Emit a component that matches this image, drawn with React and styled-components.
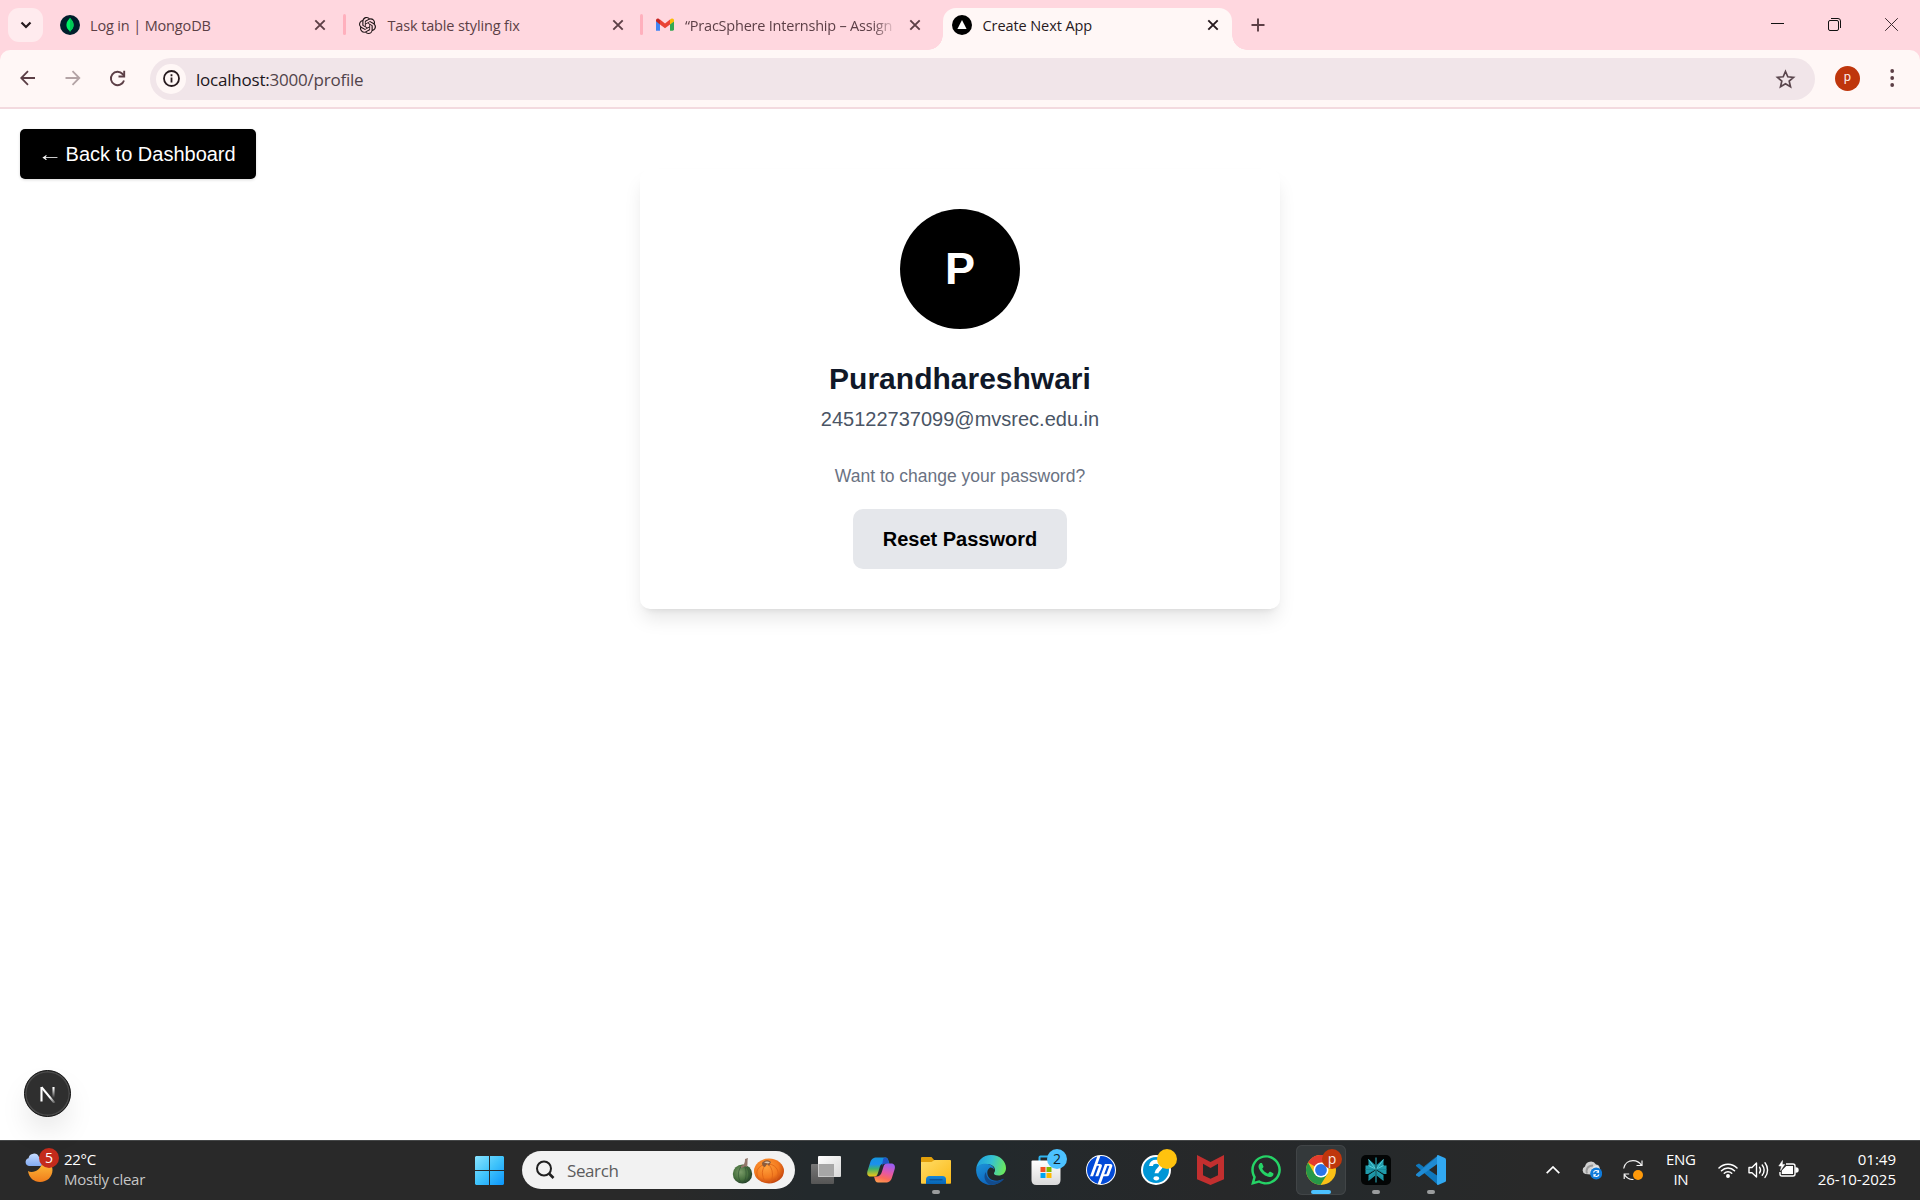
import React from "react";
import styled, { createGlobalStyle, css } from "styled-components";
import { SiOpenai, SiHp } from "react-icons/si";
import { FaWhatsapp } from "react-icons/fa";

const ui = `"Open Sans", "Noto Sans", sans-serif`;
const page = `"Liberation Sans", Arial, sans-serif`;

const Global = createGlobalStyle`
  * { box-sizing: border-box; }
  body { margin: 0; background: #fff; overflow: hidden; }
  svg { display: block; flex: none; }
  button { border: 0; padding: 0; background: none; }
`;

const Screen = styled.div`
  width: 1920px;
  height: 1200px;
  display: flex;
  flex-direction: column;
  background: #fff;
`;

/* ---------- browser chrome ---------- */

const TabStrip = styled.div`
  height: 50px;
  display: flex;
  align-items: flex-start;
  background: #ffd7df;
`;

const TabSearch = styled.button`
  width: 35px;
  height: 34px;
  margin: 8px 7px 0 8px;
  border-radius: 11px;
  background: #ffebee;
  display: grid;
  place-items: center;
`;

const TabItem = styled.div`
  position: relative;
  width: 289.5px;
  height: 42.5px;
  margin: 7.5px 0 0;
  padding: 0 9.5px 7.5px;
  display: flex;
  align-items: center;
  color: ${(p) => (p.$active ? "#271a1e" : "#5c3f46")};
  ${(p) =>
    p.$active &&
    css`
      background: #fff7f6;
      border-radius: 13px 13px 0 0;
      &::before,
      &::after {
        content: "";
        position: absolute;
        bottom: 0;
        width: 15px;
        height: 15px;
      }
      &::before {
        left: -15px;
        background: radial-gradient(circle at 0 0, transparent 14.5px, #fff7f6 15px);
      }
      &::after {
        right: -15px;
        background: radial-gradient(circle at 100% 0, transparent 14.5px, #fff7f6 15px);
      }
    `}
`;

const TabTitle = styled.div`
  flex: 1;
  margin-left: 10.5px;
  margin-right: 7.5px;
  white-space: nowrap;
  font: 400 14.5px/20px ${ui};
  letter-spacing: ${(p) => p.$spacing || 0}px;
  padding-top: 1px;
  ${(p) => p.$fade && css`mask-image: linear-gradient(90deg, #000 187px, transparent 212px);`}
`;

const Divider = styled.div`
  width: 3px;
  height: 21px;
  margin: 14px 2px 0 3px;
  border-radius: 2px;
  background: ${(p) => (p.$hidden ? "transparent" : "#ffb0bd")};
`;

const NewTab = styled.button`
  width: 30px;
  height: 30px;
  margin: 10px 0 0 10.5px;
  display: grid;
  place-items: center;
`;

const WindowControls = styled.div`
  margin-left: auto;
  display: flex;
  height: 49px;
  align-items: center;
  padding-right: 0.5px;
`;

const WindowButton = styled.button`
  width: 57px;
  height: 49px;
  display: grid;
  place-items: center;
`;

const ToolbarBack = styled.div`
  background: #ffd7df;
`;

const Toolbar = styled.div`
  height: 59px;
  display: flex;
  align-items: center;
  padding: 0 0 1px 5px;
  background: #fff7f6;
  border-radius: 10px 10px 0 0;
  border-bottom: 2px solid #f3dadf;
`;

const ToolButton = styled.button`
  width: 45px;
  height: 40px;
  display: grid;
  place-items: center;
`;

const Omnibox = styled.div`
  width: 1665px;
  height: 42px;
  margin-left: 10px;
  margin-top: 1px;
  border-radius: 21px;
  padding: 0 16px 0 6px;
  background: #f1e5e9;
  display: flex;
  align-items: center;
`;

const SiteInfo = styled.div`
  width: 30px;
  height: 30px;
  border-radius: 50%;
  background: #fff7f6;
  display: grid;
  place-items: center;
`;

const Url = styled.div`
  flex: 1;
  margin-left: 10px;
  font: 400 17px/24px ${ui};
  letter-spacing: -0.22px;
  color: #51434a;
  padding-top: 2px;
  span { color: #20161c; }
`;

const ProfileDot = styled.div`
  width: 25px;
  height: 25px;
  margin: 0 10px 0 20px;
  border-radius: 50%;
  background: #bf360c;
  color: #fbe9e4;
  display: grid;
  place-items: center;
  font: 400 13px/1 Roboto, sans-serif;
  padding-bottom: 3px;
`;

/* ---------- page ---------- */

const Page = styled.main`
  position: relative;
  flex: 1;
  padding: 20px;
  display: flex;
  flex-direction: column;
  align-items: flex-start;
  font-family: ${page};
`;

const BackButton = styled.button`
  height: 50px;
  padding: 0 20px;
  border-radius: 5px;
  background: #000;
  color: #fff;
  font: 400 20px/30px ${page};
  white-space: nowrap;
  box-shadow: 0 1px 3px rgba(0, 0, 0, 0.15);
  margin-bottom: -10px;
`;

const Arrow = styled.span`
  display: inline-block;
  transform: scaleX(1.25);
`;

const Card = styled.section`
  width: 640px;
  height: 440px;
  align-self: center;
  padding: 40px;
  border-radius: 10px;
  background: #fff;
  display: flex;
  flex-direction: column;
  align-items: center;
  box-shadow: 0 12.5px 18.75px -3.75px rgba(0, 0, 0, 0.1), 0 5px 7.5px -5px rgba(0, 0, 0, 0.1);
`;

const Avatar = styled.div`
  width: 120px;
  height: 120px;
  border-radius: 50%;
  background: #000;
  color: #fff;
  display: grid;
  place-items: center;
  font: 700 45px/50px ${page};
  margin-bottom: 30px;
`;

const Name = styled.h1`
  margin: 0;
  font: 700 30px/40px ${page};
  color: #101828;
`;

const Email = styled.p`
  margin: 5px 0 0;
  font: 400 20px/30px ${page};
  color: #4a5565;
`;

const Hint = styled.p`
  margin: 30px 0 0;
  font: 400 17.5px/25px ${page};
  color: #6a7282;
`;

const ResetButton = styled.button`
  height: 60px;
  margin-top: 20px;
  padding: 0 30px;
  border-radius: 10px;
  background: #e5e7eb;
  color: #000;
  font: 700 20px/30px ${page};
`;

const DevBadge = styled.div`
  position: absolute;
  left: 24px;
  bottom: 23px;
  width: 47px;
  height: 47px;
  border-radius: 50%;
  border: 1px solid #111;
  background: #2f2f2f;
  box-shadow: inset 0 0 0 1.5px #4a4a4a, 0 16px 32px -8px rgba(0, 0, 0, 0.18);
  display: grid;
  place-items: center;
`;

/* ---------- taskbar ---------- */

const Taskbar = styled.footer`
  height: 60px;
  display: grid;
  grid-template-columns: 465px 991px 1fr;
  padding-bottom: 1px;
  background: linear-gradient(90deg, #292929 0, #292929 35%, #23292c 42%, #23292c 52%, #272829 64%, #25292b 70%, #292929 80%);
  border-top: 1px solid #454748;
  color: #fff;
`;

const Weather = styled.div`
  display: flex;
  align-items: center;
  padding-left: 24px;
  gap: 4px;
`;

const Lines = styled.div`
  font: 400 ${(p) => p.$size || 15}px/20px ${ui};
  letter-spacing: ${(p) => p.$spacing || 0}px;
  text-align: ${(p) => p.$align || "left"};
  white-space: nowrap;
  padding-bottom: 2px;
`;

const Muted = styled.div`
  color: #c6c6c6;
  letter-spacing: -0.25px;
`;

const Apps = styled.div`
  display: flex;
  align-items: center;
  gap: 5px;
`;

const Slot = styled.div`
  position: relative;
  width: 50px;
  height: 50px;
  border-radius: 6px;
  display: grid;
  place-items: center;
  ${(p) => p.$active && css`background: #34393b; box-shadow: inset 0 0 0 1px #414547;`}
  &::after {
    content: "";
    position: absolute;
    bottom: 1px;
    left: 50%;
    transform: translateX(-50%);
    width: ${(p) => (p.$active ? 20 : p.$open ? 8 : 0)}px;
    height: 4px;
    border-radius: 2px;
    background: ${(p) => (p.$active ? "#4cc2ff" : "#9a9c9d")};
  }
`;

const Badge = styled.span`
  position: absolute;
  top: 4px;
  right: 4px;
  width: 20px;
  height: 20px;
  border-radius: 50%;
  display: grid;
  place-items: center;
  background: ${(p) => p.$bg};
  color: ${(p) => p.$fg || "#fff"};
  font: 400 14px/20px ${ui};
`;

const SearchBox = styled.div`
  width: 273px;
  height: 38px;
  margin: 0 1px 0 2px;
  border-radius: 19px;
  background: #f2f2f2;
  display: flex;
  align-items: center;
  padding: 0 11px 0 13px;
  font: 400 17px/24px ${ui};
  color: #5c5c5c;
  letter-spacing: -0.4px;
`;

const SearchLabel = styled.span`
  flex: 1;
  margin-left: 12px;
  padding-top: 1px;
`;

const Tray = styled.div`
  display: flex;
  align-items: center;
  justify-content: flex-end;
  padding-right: 24px;
`;

const Spacer = styled.i`
  width: ${(p) => p.$w}px;
`;

const WeatherArt = styled.div`
  position: relative;
  width: 36px;
  height: 40px;
`;

const WeatherBadge = styled(Badge)`
  top: -2px;
  right: 1px;
`;

/* ---------- icons ---------- */

const CloseX = ({ color = "#5c3f46" }) => (
  <svg width="20" height="20" viewBox="0 0 20 20" stroke={color} strokeWidth="1.9">
    <path d="M5.3 5.3l9.4 9.4M14.7 5.3l-9.4 9.4" />
  </svg>
);

const MongoIcon = () => (
  <svg width="20" height="20" viewBox="0 0 20 20">
    <circle cx="10" cy="10" r="10" fill="#001e2b" />
    <path d="M10 2.8c1.2 1.8 3.6 3.6 3.6 7.2 0 3-1.8 4.8-3.3 6l-.3 1.4-.3-1.4C8.200 14.800 6.400 13 6.400 10c0-3.600 2.400-5.400 3.600-7.200z" fill="#00ed64" />
    <path d="M10 2.800c1.200 1.800 3.600 3.600 3.600 7.200 0 3-1.800 4.800-3.300 6l-.3 1.400z" fill="#00c955" />
  </svg>
);

const GmailIcon = () => (
  <svg width="20" height="20" viewBox="0 0 20 20">
    <path d="M1 5.500v10.300h4V9z" fill="#4285f4" />
    <path d="M15 9v6.800h2.700c.7 0 1.300-.5 1.300-1.200V6z" fill="#34a853" />
    <path d="M1 6.200 5 9.500V4.800l-1-.8C2.500 3 1 3.800 1 5.500z" fill="#c5221f" />
    <path d="M5 4.600l5 3.800 5-3.800v4.900l-5 3.700-5-3.700z" fill="#ea4335" />
    <path d="M15 4.600v4.900l4-3V5.500C19 3.700 17.500 3 16 3.900z" fill="#fbbc04" />
  </svg>
);

const NextTriangle = () => (
  <svg width="20" height="20" viewBox="0 0 20 20">
    <circle cx="10" cy="10" r="10" fill="#000" />
    <path d="M10 5l4.600 8.900H5.400z" fill="#fff" />
  </svg>
);

const WindowsIcon = () => (
  <svg width="30" height="30" viewBox="0 0 30 30">
    <defs>
      <linearGradient id="win" gradientUnits="userSpaceOnUse" x1="0" y1="0" x2="30" y2="30">
        <stop offset="0" stopColor="#8be4ff" />
        <stop offset=".5" stopColor="#3fc3fb" />
        <stop offset="1" stopColor="#0a93fb" />
      </linearGradient>
    </defs>
    <path fill="url(#win)" d="M1 1h13v14H0V2zM15 1h13l1 1v13H15zM0 16h14v14H1l-1-1zM15 16h14v13l-1 1H15z" />
  </svg>
);

const Pumpkins = () => (
  <svg width="53" height="30" viewBox="0 0 53 30">
    <defs>
      <radialGradient id="orange" cx=".4" cy=".35" r=".7">
        <stop offset="0" stopColor="#ffa13c" /><stop offset=".6" stopColor="#f37a1f" /><stop offset="1" stopColor="#bd3e0c" />
      </radialGradient>
      <radialGradient id="green" cx=".4" cy=".4" r=".65">
        <stop offset="0" stopColor="#799b68" /><stop offset=".6" stopColor="#48713f" /><stop offset="1" stopColor="#213b26" />
      </radialGradient>
    </defs>
    <ellipse cx="11.500" cy="19" rx="9.700" ry="9.500" fill="url(#green)" />
    <path d="M12 10c-6 4-6 14-1 18M13 10c3 5 3 14-1 18M14 11c5 4 5 11 2 16" fill="none" stroke="#2c5030" strokeWidth=".6" />
    <path d="M10 11c3-1 4-3 4-7l3-1c-1 3 0 5-1 9-2-1-3 0-6 1z" fill="#92766a" />
    <ellipse cx="38" cy="16" rx="15" ry="12.500" fill="url(#orange)" />
    <path d="M36 9c-9 1-13 8-8 15M36 9c-6 4-6 12-1 19M37 9c5 4 6 13 2 19M38 9c8 1 12 9 7 16" fill="none" stroke="#dd6215" strokeWidth=".8" />
    <path d="M31 8c2-3 6-4 9-1l-2 4-2-2-2 3c-2 0-3-2-3-4z" fill="#8c5c3c" />
    <path d="M33 7.500c2-1.500 4-1.500 6 0l-2 1z" fill="#e0c8ad" />
  </svg>
);

const TaskViewIcon = () => (
  <svg width="30" height="28" viewBox="0 0 30 28">
    <defs>
      <linearGradient id="tv" x2="1" y2="1"><stop stopColor="#fff" /><stop offset="1" stopColor="#d8d8d8" /></linearGradient>
      <linearGradient id="tv2" y2="1" x2="0"><stop stopColor="#777" /><stop offset="1" stopColor="#555" /></linearGradient>
    </defs>
    <rect x="0" y="8" width="23" height="20" rx="1" fill="url(#tv2)" />
    <rect x="7" y="0" width="23" height="21" rx="1" fill="url(#tv)" />
    <path d="M7.500 8H23v12.500H8q-.5 0-.5-.5z" fill="#a7a7a7" />
  </svg>
);

const CopilotIcon = () => (
  <svg width="30" height="30" viewBox="0 0 30 30">
    <defs>
      <linearGradient id="cpa" x1=".3" y1="0" x2=".3" y2="1">
        <stop stopColor="#1595dc" /><stop offset=".35" stopColor="#1b8ff0" /><stop offset=".6" stopColor="#3fb26c" /><stop offset="1" stopColor="#f6c512" />
      </linearGradient>
      <linearGradient id="cpb" x1=".6" y1="0" x2=".3" y2="1">
        <stop stopColor="#9a5df2" /><stop offset=".45" stopColor="#e558a6" /><stop offset=".75" stopColor="#fb6a5a" /><stop offset="1" stopColor="#ff9a50" />
      </linearGradient>
    </defs>
    <path d="M11 2.500h8.500c2 0 2.500 1.500 3 3.500l1 2.500h-5c-3 0-4 1-5 4.500l-1.500 5c-.8 2.500-1.500 3.500-4 3.500H4.500C1.500 21.500.7 19 1.500 16l2.700-8.500C5.300 4 7 2.500 11 2.500z" fill="url(#cpa)" />
    <path d="M19 2.500c2 0 2.800 1.500 3.300 3.200l.9 2.800h-3c-2.400 0-3.400.8-4.200 2.500l.8-5c.3-2 .8-3.500 2.200-3.500z" fill="#2056c8" />
    <path d="M19.500 27.500H12c-2 0-2.700-1.500-3.200-3.300L8 21.500h2.500c2.800 0 4.500-1.500 5.500-5l1.500-5c.8-2.300 1.700-3 4-3H25c3.500 0 4.500 2.500 3.700 5.500L26 22.500c-1.100 3.500-2.700 5-6.500 5z" fill="url(#cpb)" />
  </svg>
);

const FolderIcon = () => (
  <svg width="30" height="28" viewBox="0 0 30 28">
    <defs>
      <linearGradient id="fd" x2="1" y2="1"><stop stopColor="#ffdc66" /><stop offset="1" stopColor="#fbb917" /></linearGradient>
      <linearGradient id="fb" x2="0" y2="1"><stop stopColor="#1787d8" /><stop offset="1" stopColor="#0664b5" /></linearGradient>
    </defs>
    <path d="M0 2q0-1 1-1h9.500l3 3.500H29q1 0 1 1V12H0z" fill="#e3a00b" />
    <path d="M0 6h10.500l3-2H29q1 0 1 1v22q0 .700-.8.700H.8q-.8 0-.8-.800z" fill="url(#fd)" />
    <path d="M5 28v-4.500Q5 20 8.500 20h13q3.500 0 3.500 3.500V28z" fill="url(#fb)" />
    <path d="M8.500 23.800h13" stroke="#0b4c90" strokeWidth="1.200" />
  </svg>
);

const EdgeIcon = () => (
  <svg width="30" height="30" viewBox="0 0 30 30">
    <defs>
      <linearGradient id="eg" x1="0" y1=".3" x2="1" y2=".5"><stop stopColor="#1d9fe0" /><stop offset=".5" stopColor="#35c1d2" /><stop offset="1" stopColor="#6be85c" /></linearGradient>
      <linearGradient id="eb" x1="0" y1="0" x2=".6" y2="1"><stop stopColor="#1c93d8" /><stop offset="1" stopColor="#0c61bc" /></linearGradient>
    </defs>
    <path d="M.2 14C1 6 7 0 15 0c9 0 15 6.300 15 13 0 5-3.500 7.500-7.500 7.500-3.500 0-5-1.500-4.500-2.500 1-1.500 1-2 1-3 0-3.500-3.500-6-8.500-6C5 9 1 11.500.2 14z" fill="url(#eg)" />
    <path d="M.1 15C.1 10.500 5 8.500 10 8.700c4.500.2 8 2.500 8 5.800-1-1.500-3-2.500-4.500-1.500-3 2-2.800 7-.2 10 3 3.500 9 3.500 13.500 1C24.500 27.500 20 30 15 30 6.500 30 .1 23.500.1 15z" fill="url(#eb)" />
    <path d="M10 17c0 6 5 10 10 9.500 3-.2 5-1.500 7-2.700.5-.3 1 .2.600.800C24.800 28 20 30 15 30c-4-1-6.500-5-6.500-8.500 0-1.800.5-3.300 1.500-4.500z" fill="#134b8b" />
  </svg>
);

const StoreIcon = () => (
  <svg width="30" height="30" viewBox="0 0 30 30">
    <defs><linearGradient id="st" x2="0" y2="1"><stop stopColor="#fff" /><stop offset="1" stopColor="#d9d9d9" /></linearGradient></defs>
    <path d="M8.500 7V2.500Q8.500 1.500 9.500 1.500h10.500q1.500 0 1.500 1V7" fill="none" stroke="#2fb4ef" strokeWidth="2" />
    <path d="M.5 6.500q0-1 1-1h27q1 0 1 1V25q0 5-5 5h-19q-5 0-5-5z" fill="url(#st)" />
    <path d="M9.500 12h5v5h-5z" fill="#f25022" /><path d="M15.500 12h5v5h-5z" fill="#7fba00" />
    <path d="M9.500 18h5v5h-5z" fill="#00a4ef" /><path d="M15.500 18h5v5h-5z" fill="#ffb900" />
  </svg>
);

const HpDisc = styled.div`
  width: 30px;
  height: 30px;
  border-radius: 50%;
  background: #fff;
  display: grid;
  place-items: center;
`;

const HelpDisc = styled.div`
  width: 30px;
  height: 30px;
  border-radius: 50%;
  background: #0096d6;
  border: 2px solid #fff;
  display: grid;
  place-items: center;
`;

const HelpIcon = () => (
  <HelpDisc>
    <svg width="26" height="26" viewBox="0 0 26 26">
      <path d="M8 9c0-3 2.500-4.200 5-4.200s5 1.200 5 4c0 3.500-4.500 3.500-4.500 7.500" fill="none" stroke="#fff" strokeWidth="4" />
      <ellipse cx="13.300" cy="21.300" rx="2.800" ry="2.100" fill="#fff" />
    </svg>
  </HelpDisc>
);

const McAfeeIcon = () => (
  <svg width="28" height="30" viewBox="0 0 28 30">
    <path d="M0 0l13.500 7L27 0v24.200L13.500 30 0 24.200zM6 8.800v11.400l7.500 3.500 7.500-3.500V8.800l-7.500 4.200z" fill="#c22f2f" fillRule="evenodd" />
  </svg>
);

const ChromeIcon = () => (
  <svg width="30" height="30" viewBox="0 0 30 30">
    <circle cx="15" cy="15" r="15" fill="#fbc116" />
    <path d="M15 15L2 7.500A15 15 0 0 1 28 7.500H15z" fill="#e33b2e" />
    <path d="M2 7.500A15 15 0 0 0 14.500 30l7-11.300L15 15 8.500 18.700z" fill="#279847" />
    <circle cx="15" cy="15" r="7.500" fill="#fff" />
    <circle cx="15" cy="15" r="5.900" fill="#2a74e8" />
  </svg>
);

const PerplexityIcon = () => (
  <svg width="30" height="30" viewBox="0 0 30 30">
    <rect width="30" height="30" rx="5" fill="#030505" />
    <path d="M14.300 13.500V10L7.500 4v6.500H4.500V19H7l7.300-4.300zM14.300 15.500L7.500 20v6l6.800-5.500z" fill="#1f9bab" />
    <path d="M15.700 13.500V10l6.800-6v6.500h3V19H23l-7.300-4.300zM15.700 15.500l6.800 4.500v6l-6.800-5.500z" fill="#1f9bab" />
    <path d="M7.500 4.500l6.800 9M7.500 10.500l6.800 3.500M22.500 4.500l-6.800 9M22.500 10.500L15.700 14" stroke="#5ad4df" strokeWidth=".9" />
    <path d="M4.500 14.500l9.800-.3-7.300 4.600M25.500 14.500l-9.800-.3 7.300 4.600M7.500 25l6.800-7M22.500 25l-6.800-7" fill="none" stroke="#158090" strokeWidth=".7" />
    <path d="M15 2.500v25" stroke="#2ba9b8" strokeWidth="1.100" />
  </svg>
);

const VsCodeIcon = () => (
  <svg width="30" height="30" viewBox="0 0 30 30">
    <path d="M22 0L8.500 12.500 3 8.500 0 10v1l22 19 .5-8.500L8 11.500z" fill="#0f78be" />
    <path d="M0 19.200 22 .5v8L3 22l-3-1.500z" fill="#1f8bd4" />
    <path d="M22 0l7 3q1 .5 1 1.500v21q0 1-1 1.500l-7 3q-1 0-1-1V1q0-1 1-1z" fill="#31a8f1" />
  </svg>
);

const WeatherIcon = () => (
  <svg width="36" height="40" viewBox="0 0 36 40">
    <defs>
      <linearGradient id="moon" x2="0" y2="1"><stop stopColor="#ffc23d" /><stop offset="1" stopColor="#f07c1b" /></linearGradient>
      <linearGradient id="cloud" x2="0" y2="1"><stop stopColor="#c5dbff" /><stop offset="1" stopColor="#82abf3" /></linearGradient>
    </defs>
    <path d="M4 21C8 23.500 18 21 18 11c6-1 10.500 3 10.500 9 0 7-5.500 12-12.500 12C10 32 5 28 4 21z" fill="url(#moon)" />
    <path d="M5 16A4 4 0 0 1 4.500 8.200 5.500 5.500 0 0 1 15 7a5 5 0 0 1 1.500 9z" fill="url(#cloud)" />
  </svg>
);

const OneDriveIcon = () => (
  <svg width="20" height="20" viewBox="0 0 20 20">
    <path d="M3.500 14A4 4 0 0 1 3 6.500 6 6 0 0 1 14 4.500c3 0 4 3 4 5L13 15z" fill="#d0d0d0" />
    <path d="M5 13.500C3.500 9 6 5.500 11 5.500" stroke="#9b9b9b" strokeWidth="2" fill="none" />
    <path d="M9 14l-1-4 5-4.500c3 0 4 2 4.500 4z" fill="#e9e9e9" />
    <circle cx="14.200" cy="13.500" r="6" fill="#0f7bdb" />
    <path d="M11.500 12.500a2.800 2.800 0 0 1 5-.8v-1.500m0 2h-2M17 14.500a2.800 2.800 0 0 1-5 .8v1.500m0-2h2" stroke="#fff" fill="none" strokeWidth="1.100" />
  </svg>
);

const SyncIcon = () => (
  <svg width="20" height="20" viewBox="0 0 20 20" fill="none" stroke="#f2f2f2" strokeWidth="1.200">
    <path d="M.7 8.500C1.700 3 6 .7 10 .7c4 0 7 2.300 8.500 4.800M19 .5v5h-5.500M1.200 19v-5h5M1.500 14.500c1.500 3 4.500 5 9 5" />
    <circle cx="15" cy="15" r="5" fill="#ff9a0a" stroke="none" />
  </svg>
);

const WifiIcon = () => (
  <svg width="20" height="20" viewBox="0 0 20 20" fill="none" stroke="#fff" strokeWidth="1.500" strokeLinecap="round">
    <path d="M1 8a12.500 12.500 0 0 1 18 0M3.500 10.800a9 9 0 0 1 13 0M6.300 13.300a5.300 5.300 0 0 1 7.400 0" />
    <circle cx="10" cy="16" r="1.200" fill="#fff" />
  </svg>
);

const SpeakerIcon = () => (
  <svg width="21" height="20" viewBox="0 0 21 20" fill="none" stroke="#fff" strokeWidth="1.400" strokeLinecap="round" strokeLinejoin="round">
    <path d="M1 7.500h3L8.500 3v14L4 12.800H1zM11.500 7.200c1.200 1.700 1.200 4.100 0 5.800M14.200 5c2.300 3 2.300 7.200 0 10.200M17 2.800c3.400 4.200 3.400 10.400 0 14.600" />
  </svg>
);

const BatteryIcon = () => (
  <svg width="21" height="20" viewBox="0 0 21 20" fill="none" stroke="#fff" strokeWidth="1.400">
    <path d="M8 4h7q2 0 2 2v8q0 2-2 2H4q-2 0-2-2V12" />
    <path d="M18 8q2 0 2 2t-2 2z" fill="#fff" />
    <path d="M8.500 6.700h5.800v6.600H4.500v-2.500z" fill="#fff" />
    <path d="M4.500.5L.8 6h2.700L2.500 10.500l4.200-6H4.300z" fill="#fff" strokeWidth=".5" />
  </svg>
);

const TABS = [
  { title: "Log in | MongoDB", icon: <MongoIcon />, spacing: -0.15 },
  { title: "Task table styling fix", icon: <SiOpenai size={17} color="#1c1214" />, spacing: -0.14 },
  { title: "“PracSphere Internship – Assign", icon: <GmailIcon />, fade: true, spacing: -0.22 },
  { title: "Create Next App", icon: <NextTriangle />, active: true, spacing: -0.08 },
];

const IconCell = styled.span`
  width: 20px;
  height: 20px;
  display: grid;
  place-items: center;
`;

const APPS = [
  { name: "taskview", icon: <TaskViewIcon /> },
  { name: "copilot", icon: <CopilotIcon /> },
  { name: "files", icon: <FolderIcon />, open: true },
  { name: "edge", icon: <EdgeIcon /> },
  { name: "store", icon: <StoreIcon />, badge: "2", bg: "#4cc2ff", fg: "#10222c" },
  { name: "hp", icon: <HpDisc><SiHp size={28} color="#024ad8" /></HpDisc> },
  { name: "help", icon: <HelpIcon />, badge: " ", bg: "#ffc20e" },
  { name: "mcafee", icon: <McAfeeIcon /> },
  { name: "whatsapp", icon: <FaWhatsapp size={34} color="#25d366" /> },
  { name: "chrome", icon: <ChromeIcon />, active: true, badge: "p", bg: "#bf360c", fg: "#fbe9e4" },
  { name: "perplexity", icon: <PerplexityIcon />, open: true },
  { name: "code", icon: <VsCodeIcon />, open: true },
];

export default function App() {
  return (
    <Screen>
      <Global />
      <TabStrip>
        <TabSearch>
          <svg width="12" height="12" viewBox="0 0 12 12" fill="none" stroke="#271a1e" strokeWidth="2.200">
            <path d="M1.500 3.500L6 8l4.500-4.500" />
          </svg>
        </TabSearch>
        {TABS.map((t, i) => (
          <React.Fragment key={t.title}>
            <TabItem $active={t.active}>
              <IconCell>{t.icon}</IconCell>
              <TabTitle $fade={t.fade} $spacing={t.spacing}>{t.title}</TabTitle>
              <CloseX color={t.active ? "#271a1e" : undefined} />
            </TabItem>
            {i < 3 && <Divider $hidden={i === 2} />}
          </React.Fragment>
        ))}
        <NewTab>
          <svg width="14" height="14" viewBox="0 0 14 14" stroke="#5c3f46" strokeWidth="1.900">
            <path d="M7 .5v13M.5 7h13" />
          </svg>
        </NewTab>
        <WindowControls>
          <WindowButton>
            <svg width="13" height="13" viewBox="0 0 13 13" stroke="#111"><path d="M0 5.500h13" /></svg>
          </WindowButton>
          <WindowButton>
            <svg width="13" height="13" viewBox="0 0 13 13" fill="none" stroke="#111">
              <rect x=".5" y="2.500" width="10" height="10" rx="1.500" />
              <path d="M3 .5h7q2.500 0 2.500 2.500v7" />
            </svg>
          </WindowButton>
          <WindowButton>
            <svg width="13" height="13" viewBox="0 0 13 13" stroke="#3d2b30"><path d="M.2.2l12.600 12.600M12.800.2L.2 12.800" /></svg>
          </WindowButton>
        </WindowControls>
      </TabStrip>

      <ToolbarBack>
        <Toolbar>
          <ToolButton>
            <svg width="16" height="16" viewBox="0 0 16 16" fill="none" stroke="#5c3f46" strokeWidth="1.800">
              <path d="M15 8H1.200M8 1.200L1.200 8l6.800 6.800" />
            </svg>
          </ToolButton>
          <ToolButton>
            <svg width="16" height="16" viewBox="0 0 16 16" fill="none" stroke="#b3a3a5" strokeWidth="1.800">
              <path d="M.5 8H14M7.500 1.200L14.300 8l-6.800 6.800" />
            </svg>
          </ToolButton>
          <ToolButton>
            <svg width="17" height="17" viewBox="0 0 17 17" fill="none" stroke="#5c3f46" strokeWidth="1.900">
              <path d="M15 10.500A6.700 6.700 0 1 1 13.600 4l1.400 1.600" />
              <path d="M15.200.8v5.700H9.500" />
            </svg>
          </ToolButton>
          <Omnibox>
            <SiteInfo>
              <svg width="17" height="17" viewBox="0 0 17 17" fill="none" stroke="#271a1e" strokeWidth="1.800">
                <circle cx="8.500" cy="8.500" r="7.500" />
                <path d="M8.500 7.500v5M8.500 4.300v1.900" />
              </svg>
            </SiteInfo>
            <Url><span>localhost:</span>3000/profile</Url>
            <svg width="28" height="20" viewBox="0 0 28 20" fill="none" stroke="#5a464d" strokeWidth="1.700">
              <path d="M14.500 2.500l2.300 5.300 5.700.5-4.300 3.800 1.300 5.600-5-3-5 3 1.300-5.600-4.300-3.800 5.700-.5z" />
            </svg>
          </Omnibox>
          <ProfileDot>p</ProfileDot>
          <ToolButton>
            <svg width="5" height="20" viewBox="0 0 5 20" fill="#5c3f46">
              <circle cx="2.200" cy="3" r="1.900" /><circle cx="2.200" cy="10" r="1.900" /><circle cx="2.200" cy="17" r="1.900" />
            </svg>
          </ToolButton>
        </Toolbar>
      </ToolbarBack>

      <Page>
        <BackButton><Arrow>←</Arrow> Back to Dashboard</BackButton>
        <Card>
          <Avatar>P</Avatar>
          <Name>Purandhareshwari</Name>
          <Email>245122737099@mvsrec.edu.in</Email>
          <Hint>Want to change your password?</Hint>
          <ResetButton>Reset Password</ResetButton>
        </Card>
        <DevBadge>
          <svg width="18" height="18" viewBox="0 0 18 18" fill="none" strokeWidth="2.100">
            <defs>
              <linearGradient id="n1" gradientUnits="userSpaceOnUse" x1="11" y1="12" x2="17" y2="19">
                <stop stopColor="#fff" /><stop offset="1" stopColor="#fff" stopOpacity="0" />
              </linearGradient>
              <linearGradient id="n2" gradientUnits="userSpaceOnUse" x1="14" y1="3" x2="14" y2="13">
                <stop stopColor="#fff" /><stop offset="1" stopColor="#fff" stopOpacity="0" />
              </linearGradient>
            </defs>
            <path d="M2.500 16.500V2" stroke="#fff" />
            <path d="M2.500 2.200L15.500 18" stroke="url(#n1)" />
            <path d="M14.500 2v11" stroke="url(#n2)" />
          </svg>
        </DevBadge>
      </Page>

      <Taskbar>
        <Weather>
          <WeatherArt>
            <WeatherIcon />
            <WeatherBadge $bg="#c42b1c">5</WeatherBadge>
          </WeatherArt>
          <Lines $spacing={-0.3}>
            22°C
            <Muted>Mostly clear</Muted>
          </Lines>
        </Weather>
        <Apps>
          <Slot><WindowsIcon /></Slot>
          <SearchBox>
            <svg width="20" height="20" viewBox="0 0 20 20" fill="none" stroke="#202020" strokeWidth="2">
              <circle cx="9" cy="8.500" r="7" /><path d="M14 13.500l4.500 4.500" strokeWidth="2.600" />
            </svg>
            <SearchLabel>Search</SearchLabel>
            <Pumpkins />
          </SearchBox>
          {APPS.map((a) => (
            <Slot key={a.name} $active={a.active} $open={a.open}>
              {a.icon}
              {a.badge && <Badge $bg={a.bg} $fg={a.fg}>{a.badge}</Badge>}
            </Slot>
          ))}
        </Apps>
        <Tray>
          <svg width="14" height="8" viewBox="0 0 14 8" fill="none" stroke="#fff" strokeWidth="1.700"><path d="M.7 7.200L7 1l6.300 6.200" /></svg>
          <Spacer $w={22} />
          <OneDriveIcon />
          <Spacer $w={21} />
          <SyncIcon />
          <Spacer $w={23} />
          <Lines $align="center" $spacing={-0.3}>ENG<br />IN</Lines>
          <Spacer $w={22} />
          <WifiIcon />
          <Spacer $w={10} />
          <SpeakerIcon />
          <Spacer $w={9} />
          <BatteryIcon />
          <Spacer $w={19} />
          <Lines $align="right" $spacing={0}>01:49<br />26-10-2025</Lines>
        </Tray>
      </Taskbar>
    </Screen>
  );
}
